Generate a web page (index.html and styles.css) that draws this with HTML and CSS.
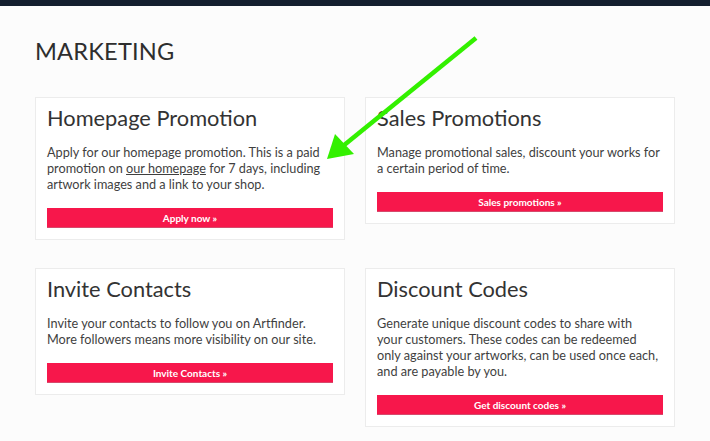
FILE: index.html
```html
<!DOCTYPE html>
<html>
<head>
<meta charset="utf-8">
<link rel="stylesheet" href="styles.css">
</head>
<body>
<div class="topbar"></div>
<main class="page">
  <h1 class="title">MARKETING</h1>
  <div class="grid">
    <section class="card">
      <h2 class="card-title">Homepage Promotion</h2>
      <p class="card-text">Apply for our homepage promotion. This is a paid promotion on <a href="#" class="link">our homepage</a> for 7 days, including artwork images and a link to your shop.</p>
      <a href="#" class="btn">Apply now »</a>
    </section>
    <section class="card">
      <h2 class="card-title">Sales Promotions</h2>
      <p class="card-text">Manage promotional sales, discount your works for a certain period of time.</p>
      <a href="#" class="btn">Sales promotions »</a>
    </section>
    <section class="card">
      <h2 class="card-title">Invite Contacts</h2>
      <p class="card-text">Invite your contacts to follow you on Artfinder. More followers means more visibility on our site.</p>
      <a href="#" class="btn">Invite Contacts »</a>
    </section>
    <section class="card">
      <h2 class="card-title">Discount Codes</h2>
      <p class="card-text">Generate unique discount codes to share with <span class="keep">your customers.</span> These codes can be redeemed only against your artworks, can be used once each, and are payable by you.</p>
      <a href="#" class="btn">Get discount codes »</a>
    </section>
  </div>
</main>
<svg class="arrow" width="710" height="441" viewBox="0 0 710 441">
  <line x1="476" y1="38" x2="343" y2="146" stroke="#33f000" stroke-width="4.5" stroke-linecap="butt"/>
  <polygon points="327,159 335,134 354,154" fill="#33f000"/>
</svg>
</body>
</html>
```
FILE: styles.css
```css
* { box-sizing: border-box; }
html, body { margin: 0; padding: 0; }
body {
  background: #fcfcfc;
  font-family: "Lato", "Liberation Sans", sans-serif;
  color: #333;
  width: 710px;
  height: 441px;
  overflow: hidden;
  position: relative;
}
.topbar {
  height: 6px;
  background: #131f2e;
}
.page {
  padding: 0 35px;
}
.title {
  margin: 30px 0 0;
  font-size: 23.6px;
  line-height: 30px;
  font-weight: 400;
  letter-spacing: 0.2px;
  color: #2e2e2e;
}
.grid {
  margin-top: 31px;
  display: grid;
  grid-template-columns: 310px 310px;
  column-gap: 20px;
  row-gap: 28px;
  align-items: start;
}
.card {
  background: #fff;
  border: 1px solid #ececec;
  padding: 6px 11px 11px;
}
.card-title {
  margin: 0;
  font-size: 21.8px;
  line-height: 27px;
  font-weight: 400;
  color: #333;
}
.card-text {
  margin: 13px 0 0;
  font-size: 12.7px;
  line-height: 16px;
  color: #3f3f3f;
}
.keep {
  white-space: nowrap;
}
.link {
  color: #3f3f3f;
  text-decoration: underline;
}
.btn {
  display: block;
  margin-top: 16px;
  height: 20px;
  line-height: 20px;
  background: #f7174b;
  border-bottom: 1px solid #d64a6c;
  color: #fff;
  text-align: center;
  font-size: 10px;
  font-weight: 700;
  text-decoration: none;
}
.arrow {
  position: absolute;
  left: 0;
  top: 0;
  pointer-events: none;
}
```
